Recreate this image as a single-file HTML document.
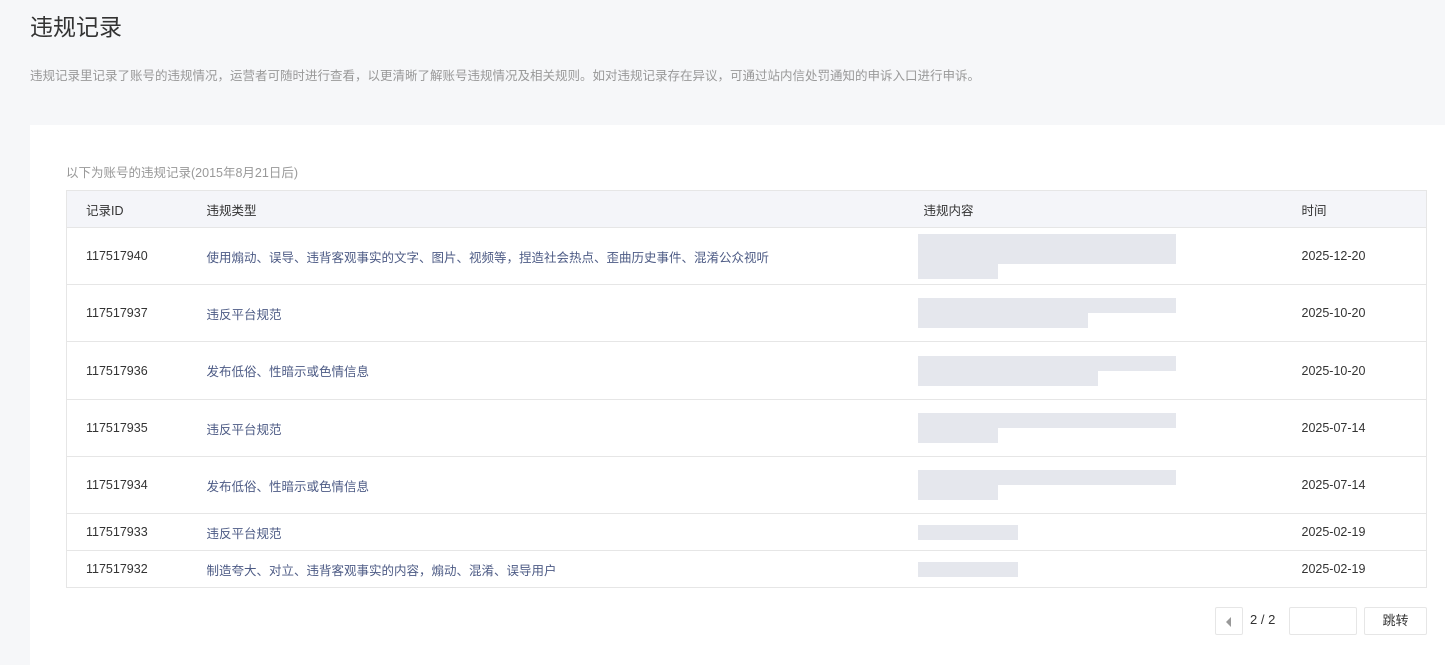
<!DOCTYPE html>
<html><head><meta charset="utf-8"><style>
*{margin:0;padding:0;box-sizing:border-box}
body{width:1445px;height:659px;overflow:hidden;background:#f6f7f9;font-family:"Liberation Sans","Noto Sans CJK SC",sans-serif;color:#333;position:relative}
.t{position:absolute;left:30px;top:8px;font-size:23px;color:#333}
.d{position:absolute;left:30px;top:65px;font-size:12.5px;color:#999}
.card{position:absolute;left:30px;top:125px;width:1415px;height:540px;background:#fff}
.sub{position:absolute;left:66px;top:162px;font-size:12.5px;color:#999}
table{position:absolute;left:66px;top:190px;width:1361px;border-collapse:collapse;font-size:12.5px;border:1px solid #e6e6e6}
th{background:#f4f5f9;height:37px;text-align:left;font-weight:normal;color:#333;border-bottom:1px solid #e6e6e6}
td{border-bottom:1px solid #e6e6e6;color:#333}
td.ty{color:#4d5b85}
.b{display:block;height:15px;background:#dfe1e8;opacity:.8}
.pg{position:absolute;font-size:13px}
.bx{position:absolute;border:1px solid #e6e6e6;border-radius:2px;background:#fff}
</style></head><body>
<div class="t">违规记录</div>
<div class="d">违规记录里记录了账号的违规情况，运营者可随时进行查看，以更清晰了解账号违规情况及相关规则。如对违规记录存在异议，可通过站内信处罚通知的申诉入口进行申诉。</div>
<div class="card"></div>
<div class="sub">以下为账号的违规记录(2015年8月21日后)</div>
<table>
<tr><th style="width:121px;padding-left:19px">记录ID</th><th style="width:717px;padding-left:19px">违规类型</th><th style="width:380px;padding-left:19px">违规内容</th><th style="padding-left:17px">时间</th></tr>
<tr style="height:57px"><td style="padding-left:19px">117517940</td><td class="ty" style="padding-left:19px">使用煽动、误导、违背客观事实的文字、图片、视频等，捏造社会热点、歪曲历史事件、混淆公众视听</td><td style="padding-left:13px"><span class="b" style="width:258px"></span><span class="b" style="width:258px"></span><span class="b" style="width:80px"></span></td><td style="padding-left:17px">2025-12-20</td></tr>
<tr style="height:57px"><td style="padding-left:19px">117517937</td><td class="ty" style="padding-left:19px">违反平台规范</td><td style="padding-left:13px"><span class="b" style="width:258px"></span><span class="b" style="width:170px"></span></td><td style="padding-left:17px">2025-10-20</td></tr>
<tr style="height:58px"><td style="padding-left:19px">117517936</td><td class="ty" style="padding-left:19px">发布低俗、性暗示或色情信息</td><td style="padding-left:13px"><span class="b" style="width:258px"></span><span class="b" style="width:180px"></span></td><td style="padding-left:17px">2025-10-20</td></tr>
<tr style="height:57px"><td style="padding-left:19px">117517935</td><td class="ty" style="padding-left:19px">违反平台规范</td><td style="padding-left:13px"><span class="b" style="width:258px"></span><span class="b" style="width:80px"></span></td><td style="padding-left:17px">2025-07-14</td></tr>
<tr style="height:57px"><td style="padding-left:19px">117517934</td><td class="ty" style="padding-left:19px">发布低俗、性暗示或色情信息</td><td style="padding-left:13px"><span class="b" style="width:258px"></span><span class="b" style="width:80px"></span></td><td style="padding-left:17px">2025-07-14</td></tr>
<tr style="height:37px"><td style="padding-left:19px">117517933</td><td class="ty" style="padding-left:19px">违反平台规范</td><td style="padding-left:13px"><span class="b" style="width:100px"></span></td><td style="padding-left:17px">2025-02-19</td></tr>
<tr style="height:37px"><td style="padding-left:19px">117517932</td><td class="ty" style="padding-left:19px">制造夸大、对立、违背客观事实的内容，煽动、混淆、误导用户</td><td style="padding-left:13px"><span class="b" style="width:100px"></span></td><td style="padding-left:17px">2025-02-19</td></tr>
</table>
<div class="bx" style="left:1215px;top:607px;width:28px;height:28px"><div style="position:absolute;left:10px;top:9px;width:0;height:0;border-top:5px solid transparent;border-bottom:5px solid transparent;border-right:5px solid #999"></div></div>
<div class="pg" style="left:1250px;top:612px">2 / 2</div>
<div class="bx" style="left:1289px;top:607px;width:68px;height:28px"></div>
<div class="bx" style="left:1364px;top:607px;width:63px;height:28px;font-size:13px;text-align:center;line-height:26px">跳转</div>
</body></html>
